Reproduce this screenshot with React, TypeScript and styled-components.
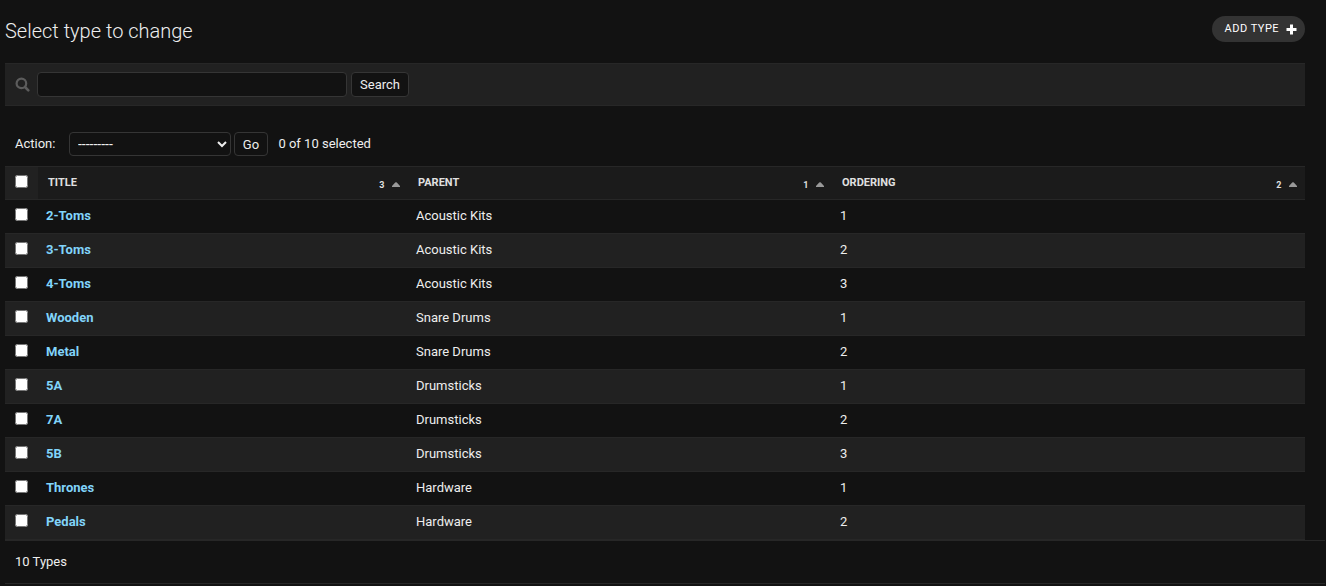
import React from "react";
import styled, { createGlobalStyle } from "styled-components";

const GlobalStyle = createGlobalStyle`
  *, *::before, *::after { box-sizing: border-box; }
  body {
    margin: 0;
    background: #121212;
    color: #eeeeee;
    font: 13px/20px Roboto, "Liberation Sans", sans-serif;
    overflow: hidden;
  }
`;

const Page = styled.main`
  height: 586px;
  padding-left: 5px;
  overflow: hidden;
`;

const Content = styled.div`
  width: 1300px;
`;

const Header = styled.header`
  display: flex;
  justify-content: space-between;
  align-items: flex-start;
  height: 63px;
  padding-top: 16px;
`;

const Heading = styled.h1`
  margin: 0;
  font-size: 20px;
  font-weight: 300;
  line-height: 30px;
`;

const AddLink = styled.a`
  display: flex;
  align-items: center;
  justify-content: space-between;
  width: 93px;
  height: 26px;
  padding: 0 8px 0 12.5px;
  border-radius: 15px;
  background: #333333;
  color: #ffffff;
  font-size: 11px;
  line-height: 26px;
  letter-spacing: 0.5px;
  text-transform: uppercase;

  span { height: 26px; white-space: nowrap; }
  svg { display: block; }
`;

const SearchBar = styled.form`
  display: flex;
  align-items: center;
  height: 43px;
  padding-left: 10px;
  border-top: 1px solid #272727;
  border-bottom: 1px solid #272727;
  background: #212121;

  svg { display: block; margin-right: 7px; }
`;

const SearchInput = styled.input`
  width: 310px;
  height: 25px;
  margin: 0 4px 0 0;
  padding: 2px 5px;
  border: 1px solid #353535;
  border-radius: 4px;
  background: #121212;
  color: #eeeeee;
  font: inherit;
`;

const Button = styled.button<{ $width: number; $height: number }>`
  width: ${(p) => p.$width}px;
  height: ${(p) => p.$height}px;
  padding: 0;
  border: 1px solid #353535;
  border-radius: 4px;
  background: #121212;
  color: #eeeeee;
  font: inherit;
`;

const Actions = styled.div`
  display: flex;
  height: 60px;
  padding: 26px 10px 0;
  line-height: 24px;
`;

const ActionLabel = styled.label`
  width: 54px;
  line-height: 23px;
`;

const Select = styled.select`
  width: 162px;
  height: 24px;
  margin: 0 3px 0 0;
  padding: 0 4px;
  border: 1px solid #353535;
  border-radius: 4px;
  background: #121212;
  color: #eeeeee;
  font: inherit;
  font-size: 14px;
`;

const Counter = styled.span`
  margin-left: 10.4px;
  line-height: 23px;
`;

const Table = styled.table`
  width: 1300px;
  table-layout: fixed;
  border-collapse: separate;
  border-spacing: 0;
`;

const HeadCell = styled.th<{ $plain?: boolean }>`
  height: 34px;
  padding: ${(p) => (p.$plain ? "8px 0 0 10px" : "0 8px 0 10px")};
  border-top: 1px solid #272727;
  border-bottom: 1px solid #272727;
  background: ${(p) => (p.$plain ? "#212121" : "#1b1b1b")};
  color: #e0e0e0;
  font-size: 11px;
  font-weight: 700;
  line-height: 16px;
  text-align: left;
  text-transform: uppercase;
  vertical-align: top;
`;

const Sortable = styled.div`
  display: flex;
  justify-content: space-between;
  padding-top: 8px;
`;

const SortMark = styled.span`
  display: flex;
  padding-top: 2px;
  gap: 7.6px;
  font-size: 9px;

  svg { display: block; margin-top: 5px; }
`;

const Row = styled.tr`
  &:nth-child(even) { background: #212121; }
`;

const Cell = styled.td`
  height: 34px;
  padding: 6px 8px 0;
  border-bottom: 1px solid #272727;
  line-height: 20px;
  vertical-align: top;
`;

const CheckCell = styled(Cell)`
  padding: 8px 0 0 10px;
`;

const TitleLink = styled.a`
  color: #81d4fa;
  font-weight: 700;
`;

const Checkbox = styled.input.attrs({ type: "checkbox" })`
  display: block;
  width: 13px;
  height: 13px;
  margin: 0;
`;

const Paginator = styled.p`
  width: 1320px;
  height: 44px;
  margin: 0;
  padding: 11px 10px 0;
  border-top: 1px solid #272727;
  border-bottom: 1px solid #272727;
`;

const columns = [
  { label: "Title", priority: 3 },
  { label: "Parent", priority: 1 },
  { label: "Ordering", priority: 2 },
];

const types: [string, string, number][] = [
  ["2-Toms", "Acoustic Kits", 1],
  ["3-Toms", "Acoustic Kits", 2],
  ["4-Toms", "Acoustic Kits", 3],
  ["Wooden", "Snare Drums", 1],
  ["Metal", "Snare Drums", 2],
  ["5A", "Drumsticks", 1],
  ["7A", "Drumsticks", 2],
  ["5B", "Drumsticks", 3],
  ["Thrones", "Hardware", 1],
  ["Pedals", "Hardware", 2],
];

export default function App() {
  return (
    <Page>
      <GlobalStyle />
      <Content>
        <Header>
          <Heading>Select type to change</Heading>
          <AddLink>
            <span>Add type</span>
            <svg width="11" height="11" viewBox="0 0 11 11">
              <path d="M4 .5h3V4h3.5v3H7v3.5H4V7H.5V4H4z" fill="#fff" />
            </svg>
          </AddLink>
        </Header>
        <SearchBar>
          <svg width="15" height="15" viewBox="0 0 15 15" fill="none" stroke="#5c5c5c">
            <circle cx="6.4" cy="6.4" r="4.8" strokeWidth="2.2" />
            <path d="M10 10l3.3 3.3" strokeWidth="2.6" strokeLinecap="round" />
          </svg>
          <SearchInput aria-label="Search" />
          <Button type="button" $width={58} $height={25}>Search</Button>
        </SearchBar>
        <Actions>
          <ActionLabel>Action:</ActionLabel>
          <Select aria-label="Action">
            <option>---------</option>
          </Select>
          <Button type="button" $width={34} $height={24}>Go</Button>
          <Counter>0 of 10 selected</Counter>
        </Actions>
        <Table>
          <colgroup>
            <col style={{ width: 33 }} />
            <col style={{ width: 370 }} />
            <col style={{ width: 424 }} />
            <col style={{ width: 473 }} />
          </colgroup>
          <thead>
            <tr>
              <HeadCell $plain><Checkbox /></HeadCell>
              {columns.map((column) => (
                <HeadCell key={column.label}>
                  <Sortable>
                    {column.label}
                    <SortMark>
                      {column.priority}
                      <svg width="8" height="5" viewBox="0 0 8 5">
                        <path d="M0 5V4L3.2 .6Q4 0 4.8 .6L8 4V5z" fill="#999" />
                      </svg>
                    </SortMark>
                  </Sortable>
                </HeadCell>
              ))}
            </tr>
          </thead>
          <tbody>
            {types.map(([title, parent, ordering]) => (
              <Row key={title}>
                <CheckCell><Checkbox /></CheckCell>
                <Cell><TitleLink>{title}</TitleLink></Cell>
                <Cell>{parent}</Cell>
                <Cell>{ordering}</Cell>
              </Row>
            ))}
          </tbody>
        </Table>
      </Content>
      <Paginator>10 Types</Paginator>
    </Page>
  );
}
